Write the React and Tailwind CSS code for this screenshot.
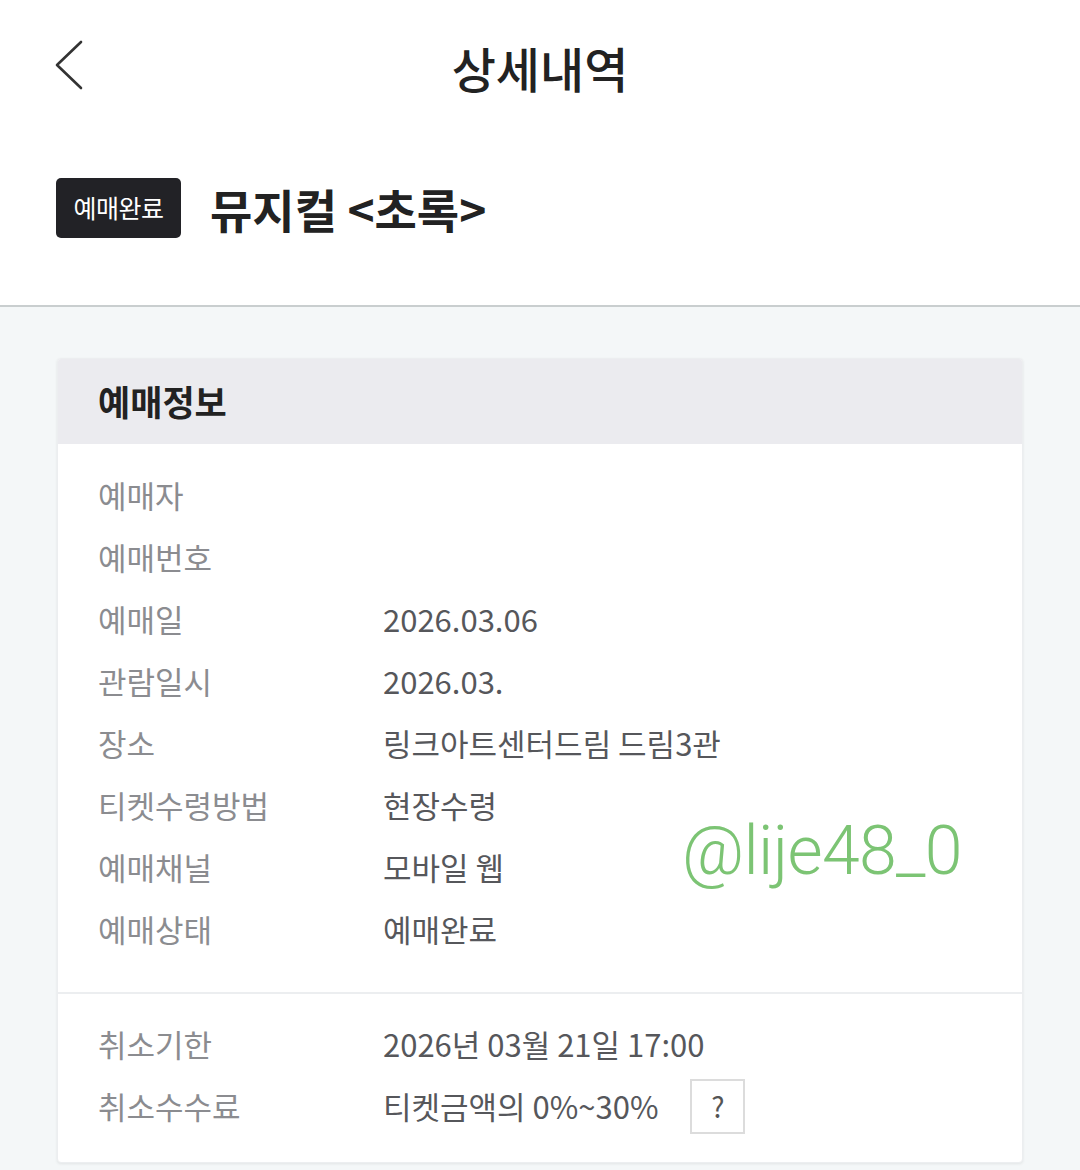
import React from "react";

const rows1 = [
  ["예매자", ""],
  ["예매번호", ""],
  ["예매일", "2026.03.06"],
  ["관람일시", "2026.03."],
  ["장소", "링크아트센터드림 드림3관"],
  ["티켓수령방법", "현장수령"],
  ["예매채널", "모바일 웹"],
  ["예매상태", "예매완료"],
];

function Row({ label, value, children }) {
  return (
    <div className="flex items-center h-[62px]">
      <div className="w-[285px] shrink-0 text-[31px] text-[#8b8c90]">{label}</div>
      <div className="flex items-center text-[31px] text-[#56575b]">
        {value}
        {children}
      </div>
    </div>
  );
}

export default function App() {
  return (
    <div
      className="w-[1080px] h-[1170px] overflow-hidden bg-[#f4f7f8]"
      style={{ fontFamily: '"Noto Sans CJK KR", "Noto Sans", sans-serif' }}
    >
      <div className="bg-white">
        <div className="relative h-[135px] flex items-center justify-center">
          <svg className="absolute left-[51px] top-[38px]" width="36" height="54" viewBox="0 0 36 54" fill="none">
            <path d="M30 4 L6 27 L30 50" stroke="#333" strokeWidth="2.6" strokeLinecap="round" strokeLinejoin="round" />
          </svg>
          <div className="text-[48px] font-medium text-[#222] -mt-[2px]">상세내역</div>
        </div>
        <div className="h-[170px] flex items-start px-[56px] pt-[43px]">
          <div className="h-[60px] w-[125px] rounded-[5px] bg-[#222226] text-white text-[25px] tracking-[-0.02em] flex items-center justify-center">
            예매완료
          </div>
          <div className="ml-[29px] h-[60px] flex items-center text-[46px] font-bold text-[#222]">
            뮤지컬 &lt;초록&gt;
          </div>
        </div>
      </div>
      <div className="h-[2px] bg-[#c9cecf]" />
      <div className="px-[57px] pt-[51px]">
        <div className="relative rounded-[4px] bg-white shadow-[0_1px_3px_rgba(0,0,0,0.08)] border border-[#eceef0] overflow-hidden">
          <div className="h-[85px] bg-[#ebebef] flex items-center px-[40px]">
            <div className="text-[35px] font-bold text-[#222]">예매정보</div>
          </div>
          <div className="px-[40px] pt-[20px] pb-[32px]">
            {rows1.map(([l, v]) => (
              <Row key={l} label={l} value={v} />
            ))}
          </div>
          <div className="h-[2px] bg-[#eceef0]" />
          <div className="px-[40px] pt-[19px] pb-[25px]">
            <Row label="취소기한" value="2026년 03월 21일 17:00" />
            <Row label="취소수수료" value="티켓금액의 0%~30%">
              <div className="ml-[32px] w-[55px] h-[55px] border-2 border-[#dcdcdc] flex items-center justify-center text-[28px] text-[#555]">
                ?
              </div>
            </Row>
          </div>
          <div
            className="absolute left-[624px] top-[458px] text-[68px] font-light text-[#7cc474] tracking-[-0.01em] leading-none"
            style={{ fontFamily: 'Roboto, "Liberation Sans", sans-serif' }}
          >
            @lije48_0
          </div>
        </div>
      </div>
    </div>
  );
}
